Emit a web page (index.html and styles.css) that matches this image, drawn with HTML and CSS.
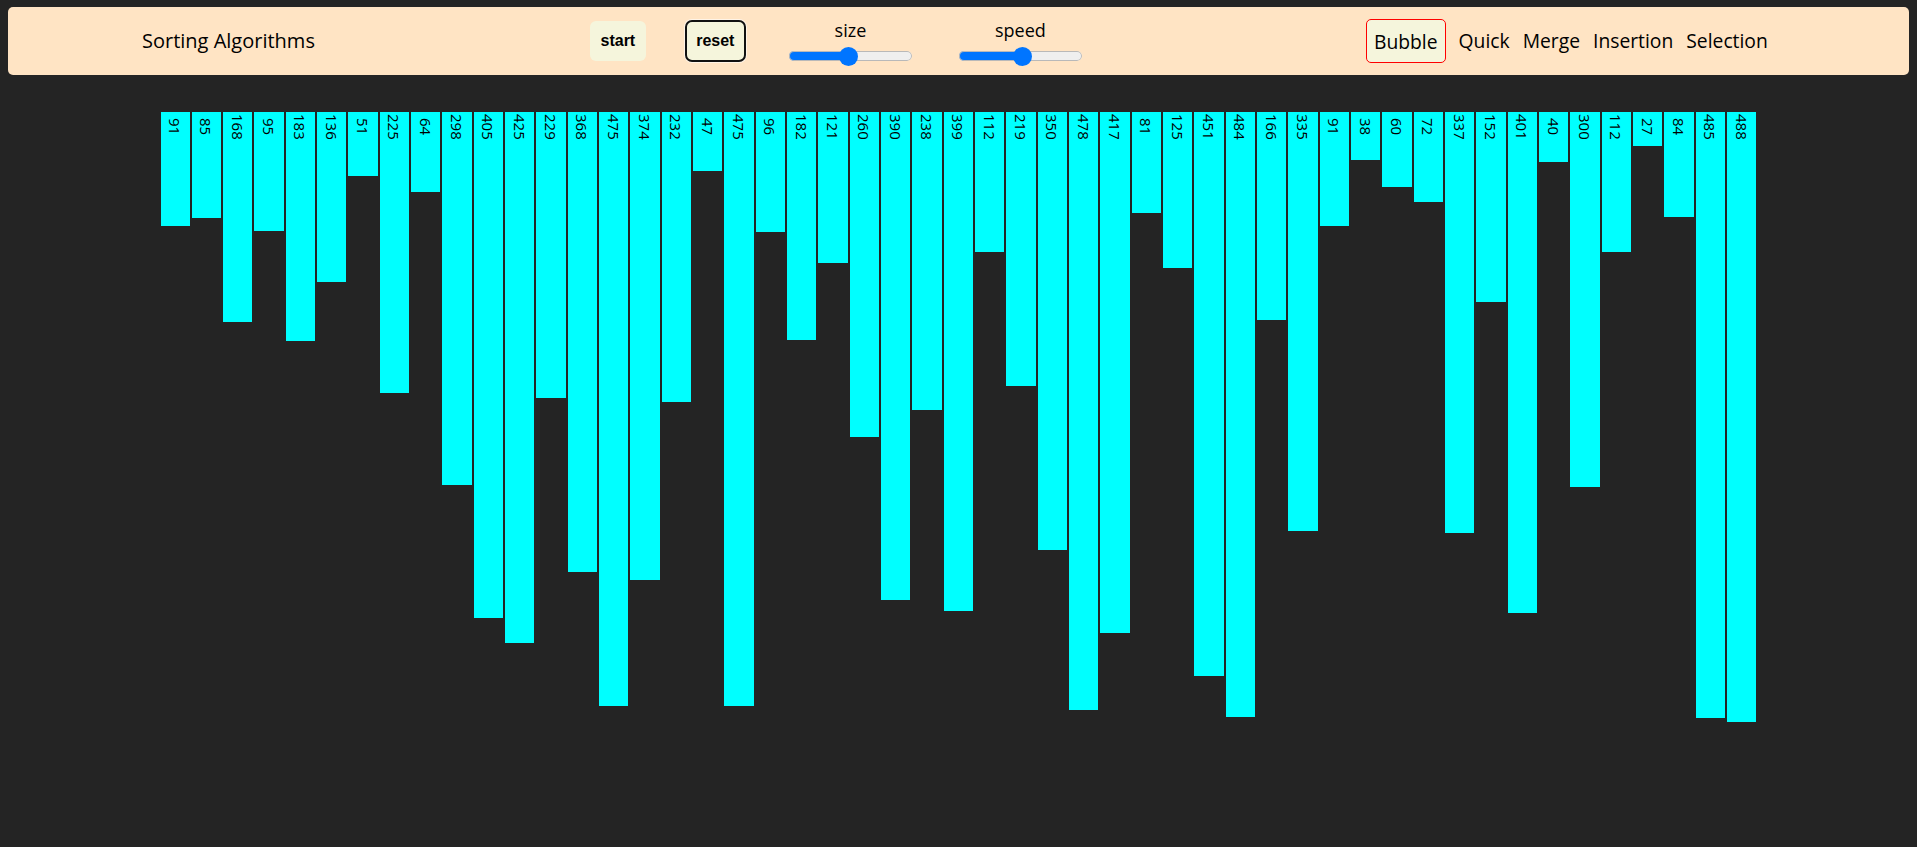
FILE: index.html
```html
<!DOCTYPE html>
<html lang="en">
<head>
<meta charset="utf-8">
<title>Sorting Algorithms</title>
<link rel="stylesheet" href="styles.css">
</head>
<body>
<header class="topbar">
  <div class="brand">Sorting Algorithms</div>
  <div class="controls">
    <button class="btn">start</button>
    <button class="btn btn-focus">reset</button>
    <div class="slider slider-size">
      <label class="slider-label">size</label>
      <input class="range" type="range" min="0" max="100" value="48" style="--fill:48%">
    </div>
    <div class="slider slider-speed">
      <label class="slider-label">speed</label>
      <input class="range" type="range" min="0" max="100" value="52" style="--fill:52%">
    </div>
  </div>
  <nav class="algos">
    <a class="algo active">Bubble</a>
    <a class="algo">Quick</a>
    <a class="algo">Merge</a>
    <a class="algo">Insertion</a>
    <a class="algo">Selection</a>
  </nav>
</header>
<main class="bars">
  <div class="bar" style="height:113.75px"><span>91</span></div>
  <div class="bar" style="height:106.25px"><span>85</span></div>
  <div class="bar" style="height:210px"><span>168</span></div>
  <div class="bar" style="height:118.75px"><span>95</span></div>
  <div class="bar" style="height:228.75px"><span>183</span></div>
  <div class="bar" style="height:170px"><span>136</span></div>
  <div class="bar" style="height:63.75px"><span>51</span></div>
  <div class="bar" style="height:281.25px"><span>225</span></div>
  <div class="bar" style="height:80px"><span>64</span></div>
  <div class="bar" style="height:372.5px"><span>298</span></div>
  <div class="bar" style="height:506.25px"><span>405</span></div>
  <div class="bar" style="height:531.25px"><span>425</span></div>
  <div class="bar" style="height:286.25px"><span>229</span></div>
  <div class="bar" style="height:460px"><span>368</span></div>
  <div class="bar" style="height:593.75px"><span>475</span></div>
  <div class="bar" style="height:467.5px"><span>374</span></div>
  <div class="bar" style="height:290px"><span>232</span></div>
  <div class="bar" style="height:58.75px"><span>47</span></div>
  <div class="bar" style="height:593.75px"><span>475</span></div>
  <div class="bar" style="height:120px"><span>96</span></div>
  <div class="bar" style="height:227.5px"><span>182</span></div>
  <div class="bar" style="height:151.25px"><span>121</span></div>
  <div class="bar" style="height:325px"><span>260</span></div>
  <div class="bar" style="height:487.5px"><span>390</span></div>
  <div class="bar" style="height:297.5px"><span>238</span></div>
  <div class="bar" style="height:498.75px"><span>399</span></div>
  <div class="bar" style="height:140px"><span>112</span></div>
  <div class="bar" style="height:273.75px"><span>219</span></div>
  <div class="bar" style="height:437.5px"><span>350</span></div>
  <div class="bar" style="height:597.5px"><span>478</span></div>
  <div class="bar" style="height:521.25px"><span>417</span></div>
  <div class="bar" style="height:101.25px"><span>81</span></div>
  <div class="bar" style="height:156.25px"><span>125</span></div>
  <div class="bar" style="height:563.75px"><span>451</span></div>
  <div class="bar" style="height:605px"><span>484</span></div>
  <div class="bar" style="height:207.5px"><span>166</span></div>
  <div class="bar" style="height:418.75px"><span>335</span></div>
  <div class="bar" style="height:113.75px"><span>91</span></div>
  <div class="bar" style="height:47.5px"><span>38</span></div>
  <div class="bar" style="height:75px"><span>60</span></div>
  <div class="bar" style="height:90px"><span>72</span></div>
  <div class="bar" style="height:421.25px"><span>337</span></div>
  <div class="bar" style="height:190px"><span>152</span></div>
  <div class="bar" style="height:501.25px"><span>401</span></div>
  <div class="bar" style="height:50px"><span>40</span></div>
  <div class="bar" style="height:375px"><span>300</span></div>
  <div class="bar" style="height:140px"><span>112</span></div>
  <div class="bar" style="height:33.75px"><span>27</span></div>
  <div class="bar" style="height:105px"><span>84</span></div>
  <div class="bar" style="height:606.25px"><span>485</span></div>
  <div class="bar" style="height:610px"><span>488</span></div>
</main>
</body>
</html>
```

FILE: styles.css
```css
html, body {
  background: #242424;
}

body {
  margin: 7px 8px 0;
  font-family: "Open Sans", "Noto Sans", sans-serif;
  color: #000;
}

.topbar {
  display: flex;
  align-items: center;
  height: 68px;
  background: #ffe4c4;
  border-radius: 5px;
}

.brand {
  width: 582px;
  flex: none;
  box-sizing: border-box;
  padding-left: 134px;
  font-size: 20px;
  line-height: 28px;
  color: #000;
}

.controls {
  width: 776px;
  flex: none;
  display: flex;
  align-items: center;
}

.btn {
  height: 40px;
  padding: 0 10.5px;
  border: none;
  border-radius: 6px;
  background: #f5f5dc;
  font-family: "Liberation Sans", Arial, sans-serif;
  font-weight: bold;
  font-size: 16px;
  color: #000;
}

.btn-focus {
  margin-left: 40px;
  outline: 2px solid #111;
  outline-offset: -1px;
  box-shadow: 0 0 0 2px rgba(255, 255, 255, 0.6);
}

.slider {
  display: flex;
  flex-direction: column;
  align-items: center;
  width: 123px;
  padding-top: 2.5px;
}

.slider-size {
  margin-left: 44px;
}

.slider-speed {
  margin-left: 47px;
}

.slider-label {
  font-size: 18px;
  line-height: 22px;
  margin-bottom: 5.5px;
  color: #000;
}

.range {
  -webkit-appearance: none;
  appearance: none;
  width: 123px;
  height: 19px;
  margin: 0;
  background: transparent;
}

.range::-webkit-slider-runnable-track {
  height: 10px;
  border-radius: 5px;
  background: linear-gradient(#0075ff, #0075ff) no-repeat 0 0 / var(--fill) 100%, #efefef;
  box-shadow: inset 0 0 0 1px #b9b9b9;
}

.range::-webkit-slider-thumb {
  -webkit-appearance: none;
  appearance: none;
  width: 19px;
  height: 19px;
  margin-top: -4.5px;
  border-radius: 50%;
  background: #0075ff;
  border: none;
}

.algos {
  display: flex;
  align-items: center;
  gap: 13px;
}

.algo {
  box-sizing: border-box;
  height: 44px;
  padding-top: 2px;
  font-size: 19.3px;
  line-height: 40px;
  color: #000;
  cursor: pointer;
}

.algo.active {
  padding-left: 7px;
  padding-right: 7px;
  border: 1px solid #ff0000;
  border-radius: 5px;
  background: #f5f5dc;
}

.bars {
  display: flex;
  align-items: flex-start;
  width: 1598px;
  margin: 37px auto 0;
}

.bar {
  flex: 1 1 0;
  margin: 0 1px;
  display: flex;
  justify-content: center;
  background: #00ffff;
}

.bar span {
  writing-mode: vertical-rl;
  height: 30px;
  text-align: center;
  font-size: 15px;
  line-height: 18px;
  color: #000;
}
```
